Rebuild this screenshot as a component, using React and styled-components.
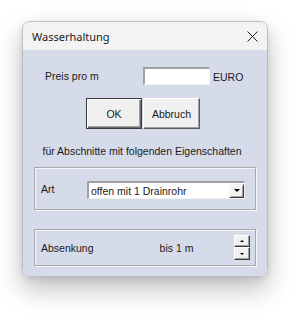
import React from 'react';
import styled, { createGlobalStyle } from 'styled-components';

const Global = createGlobalStyle`
  html, body {
    margin: 0;
    background: #ffffff;
  }
  body {
    width: 300px;
    height: 330px;
    overflow: hidden;
  }
`;

const Stage = styled.div`
  padding: 21px 0 0 22px;
`;

const Window = styled.div`
  width: 246px;
  height: 256px;
  box-sizing: border-box;
  border: 1px solid #bdbdbd;
  border-radius: 8px;
  overflow: hidden;
  display: flex;
  flex-direction: column;
  box-shadow: 0 12px 26px rgba(0, 0, 0, 0.25), 0 2px 6px rgba(0, 0, 0, 0.1);
`;

const TitleBar = styled.div`
  height: 28px;
  flex: none;
  background: #f3f3f3;
  display: flex;
  align-items: center;
  justify-content: space-between;
  padding: 0 8px 0 9px;
  font-family: "Noto Sans", sans-serif;
  font-size: 11px;
  color: #1a1a1a;
`;

const CloseIcon = styled.svg`
  width: 11px;
  height: 11px;
  margin-right: 1px;
`;

const Body = styled.div`
  flex: 1;
  background: #d6dbea;
  padding: 17px 11px 0 11px;
  font-family: "Liberation Sans", Arial, sans-serif;
  font-size: 10.5px;
  color: #1a1a1a;
  display: flex;
  flex-direction: column;
`;

const PriceRow = styled.div`
  display: flex;
  align-items: center;
  padding-left: 11px;
  height: 18px;
`;

const Label = styled.span`
  width: ${(p) => p.$w || 'auto'};
  flex: none;
  margin-top: ${(p) => p.$mt || 0}px;
`;

const TextBox = styled.div`
  width: 67px;
  height: 18px;
  box-sizing: border-box;
  background: #fff;
  border-top: 2px solid #a0a0a0;
  border-left: 2px solid #a0a0a0;
  border-bottom: 1px solid #f2f2f2;
  border-right: 1px solid #f2f2f2;
`;

const Unit = styled.span`
  margin-left: 3px;
  margin-top: 2px;
`;

const ButtonRow = styled.div`
  display: flex;
  gap: 1px;
  padding-left: 52px;
  margin-top: 13px;
`;

const Button = styled.button`
  width: ${(p) => p.$w}px;
  height: 31px;
  box-sizing: border-box;
  background: #f0f0f0;
  font-family: "Liberation Sans", Arial, sans-serif;
  font-size: 10.5px;
  color: #1a1a1a;
  padding: 0;
  border: 1px solid;
  border-color: ${(p) => (p.$default ? '#3c3c3c' : '#ffffff #5a5a5a #5a5a5a #ffffff')};
  box-shadow: ${(p) =>
    p.$default
      ? 'inset 1px 1px 0 #ffffff, inset -1px -1px 0 #6a6a6a, inset -2px -2px 0 #a0a0a0'
      : 'inset -1px -1px 0 #a0a0a0'};
`;

const Caption = styled.div`
  margin-top: 15px;
  line-height: 14px;
  text-align: center;
  padding-right: 6px;
`;

const Group = styled.div`
  height: ${(p) => p.$h}px;
  margin-top: ${(p) => p.$mt}px;
  box-sizing: border-box;
  border: 1px solid #a9a9a9;
  box-shadow: inset 1px 1px 0 #f4f6fb, 1px 1px 0 #f4f6fb;
  display: flex;
  align-items: ${(p) => p.$align || 'center'};
  padding: ${(p) => p.$pad};
`;

const Select = styled.div`
  width: 158px;
  height: 18px;
  box-sizing: border-box;
  background: #fff;
  border-top: 2px solid #a0a0a0;
  border-left: 2px solid #a0a0a0;
  border-bottom: 1px solid #f2f2f2;
  border-right: 1px solid #f2f2f2;
  display: flex;
  align-items: center;
  justify-content: space-between;
  padding-left: 2px;
`;

const ArrowButton = styled.div`
  width: 15px;
  height: 14px;
  box-sizing: border-box;
  background: #f0f0f0;
  border-top: 1px solid #f0f0f0;
  border-left: 1px solid #f0f0f0;
  border-right: 1px solid #3c3c3c;
  border-bottom: 1px solid #3c3c3c;
  box-shadow: inset 1px 1px 0 #fff, inset -1px -1px 0 #a0a0a0;
  display: flex;
  align-items: center;
  justify-content: center;
`;

const Triangle = styled.div`
  width: 0;
  height: 0;
  border-left: ${(p) => p.$s}px solid transparent;
  border-right: ${(p) => p.$s}px solid transparent;
  ${(p) => (p.$up ? 'border-bottom' : 'border-top')}: ${(p) => p.$s}px solid #000;
`;

const Value = styled.span`
  margin-left: 66px;
  flex: 1;
`;

const Spinner = styled.div`
  width: 16px;
  display: flex;
  flex-direction: column;
  margin-right: 5px;
`;

const SpinButton = styled.div`
  height: 12px;
  box-sizing: border-box;
  background: #f0f0f0;
  border-top: 1px solid #fff;
  border-left: 1px solid #fff;
  border-right: 1px solid #3c3c3c;
  border-bottom: 1px solid #3c3c3c;
  box-shadow: inset -1px -1px 0 #a0a0a0;
  display: flex;
  align-items: center;
  justify-content: center;
  & + & {
    height: 13px;
  }
`;

export default function App() {
  return (
    <>
      <Global />
      <Stage>
        <Window>
          <TitleBar>
            <span>Wasserhaltung</span>
            <CloseIcon viewBox="0 0 11 11">
              <path d="M0.5 0.5 L10.5 10.5 M10.5 0.5 L0.5 10.5" stroke="#222" strokeWidth="1" fill="none" />
            </CloseIcon>
          </TitleBar>
          <Body>
            <PriceRow>
              <Label $w="98px">Preis pro m</Label>
              <TextBox />
              <Unit>EURO</Unit>
            </PriceRow>
            <ButtonRow>
              <Button $w={56} $default>OK</Button>
              <Button $w={57}>Abbruch</Button>
            </ButtonRow>
            <Caption>für Abschnitte mit folgenden Eigenschaften</Caption>
            <Group $h={43} $mt={9} $align="flex-start" $pad="13px 0 0 6px">
              <Label $w="46px" $mt={2}>Art</Label>
              <Select>
                <span>offen mit 1 Drainrohr</span>
                <ArrowButton>
                  <Triangle $s={3.5} />
                </ArrowButton>
              </Select>
            </Group>
            <Group $h={37} $mt={19} $pad="0 0 0 6px">
              <Label>Absenkung</Label>
              <Value>bis 1 m</Value>
              <Spinner>
                <SpinButton>
                  <Triangle $s={2.5} $up />
                </SpinButton>
                <SpinButton>
                  <Triangle $s={2.5} />
                </SpinButton>
              </Spinner>
            </Group>
          </Body>
        </Window>
      </Stage>
    </>
  );
}
